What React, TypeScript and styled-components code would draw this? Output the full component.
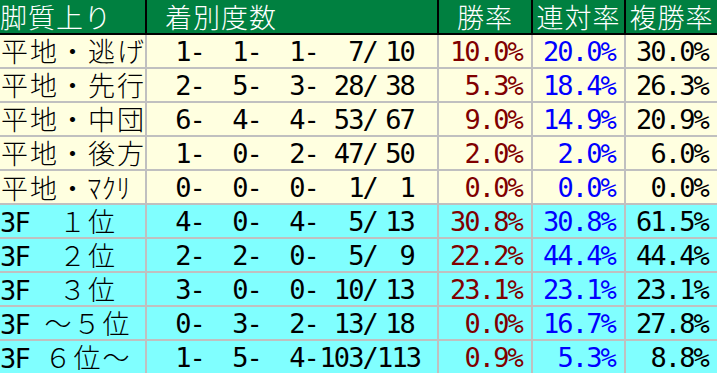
import React from 'react';
import styled, { createGlobalStyle } from 'styled-components';

const COLS = '145px 290px 92px 91px 91px';
const GREEN = '#008040';
const YELLOW = '#ffffe0';
const CYAN = '#80ffff';
const GRID = '#c0c0c0';

const Global = createGlobalStyle`
  html, body { margin: 0; padding: 0; background: ${GRID}; }
  #root { width: 717px; height: 373px; overflow: hidden; }
`;

const Table = styled.div`
  width: 717px;
  display: flex;
  flex-direction: column;
`;

const HeaderRow = styled.div`
  display: grid;
  grid-template-columns: ${COLS};
  column-gap: 2px;
  background: #000;
  padding-bottom: 2px;
`;

const HeaderCell = styled.div<{ $align: 'left' | 'center'; $pad?: number }>`
  height: 33px;
  background: ${GREEN};
  color: #fff;
  font-family: "Noto Sans CJK JP", sans-serif;
  font-weight: 300;
  font-size: 27px;
  line-height: 33px;
  letter-spacing: 1px;
  text-align: ${(p) => p.$align};
  padding-left: ${(p) => p.$pad ?? 0}px;
  box-sizing: border-box;
  white-space: nowrap;
`;

const Body = styled.div`
  display: grid;
  grid-template-columns: ${COLS};
  grid-auto-rows: 32px;
  gap: 2px;
  background: ${GRID};
`;

const Row = styled.div`
  display: contents;
`;

const LabelCell = styled.div<{ $tone: 'yellow' | 'cyan' }>`
  background: ${(p) => (p.$tone === 'yellow' ? YELLOW : CYAN)};
  color: #000;
  font-family: "Noto Sans CJK JP", sans-serif;
  font-weight: 300;
  font-size: 27px;
  line-height: 32px;
  white-space: nowrap;
`;

const Ch = styled.span<{ $kind: 'full' | 'half' | 'ascii' }>`
  display: inline-block;
  width: ${(p) => (p.$kind === 'full' ? 29 : 14.5)}px;
  text-align: center;
  font-family: ${(p) =>
    p.$kind === 'ascii' ? '"DejaVu Sans Mono", monospace' : '"Noto Sans CJK JP", sans-serif'};
  font-size: ${(p) => (p.$kind === 'half' ? 28 : 27)}px;
  letter-spacing: ${(p) => (p.$kind === 'ascii' ? '-1.75px' : 'normal')};
  vertical-align: baseline;
`;

const CountsCell = styled.div<{ $tone: 'yellow' | 'cyan' }>`
  background: ${(p) => (p.$tone === 'yellow' ? YELLOW : CYAN)};
  display: flex;
  color: #000;
  font-family: "DejaVu Sans Mono", monospace;
  font-size: 27px;
  letter-spacing: -1.85px;
  line-height: 30px;
  padding-top: 2px;
  box-sizing: border-box;
  white-space: nowrap;
`;

const Seg = styled.span<{ $w: number }>`
  flex: 0 0 ${(p) => p.$w}px;
  text-align: right;
`;

const RateCell = styled.div<{ $tone: 'yellow' | 'cyan'; $color: string }>`
  background: ${(p) => (p.$tone === 'yellow' ? YELLOW : CYAN)};
  color: ${(p) => p.$color};
  font-family: "DejaVu Sans Mono", monospace;
  font-size: 27px;
  letter-spacing: -1.85px;
  line-height: 30px;
  padding-top: 2px;
  padding-right: 9px;
  box-sizing: border-box;
  text-align: right;
  white-space: nowrap;
`;

type Tone = 'yellow' | 'cyan';
interface Data {
  label: string;
  counts: [number, number, number, number, number];
  rates: [string, string, string];
  tone: Tone;
}

const rows: Data[] = [
  { label: '平地・逃げ', counts: [1, 1, 1, 7, 10], rates: ['10.0%', '20.0%', '30.0%'], tone: 'yellow' },
  { label: '平地・先行', counts: [2, 5, 3, 28, 38], rates: ['5.3%', '18.4%', '26.3%'], tone: 'yellow' },
  { label: '平地・中団', counts: [6, 4, 4, 53, 67], rates: ['9.0%', '14.9%', '20.9%'], tone: 'yellow' },
  { label: '平地・後方', counts: [1, 0, 2, 47, 50], rates: ['2.0%', '2.0%', '6.0%'], tone: 'yellow' },
  { label: '平地・ﾏｸﾘ', counts: [0, 0, 0, 1, 1], rates: ['0.0%', '0.0%', '0.0%'], tone: 'yellow' },
  { label: '3F  １位', counts: [4, 0, 4, 5, 13], rates: ['30.8%', '30.8%', '61.5%'], tone: 'cyan' },
  { label: '3F  ２位', counts: [2, 2, 0, 5, 9], rates: ['22.2%', '44.4%', '44.4%'], tone: 'cyan' },
  { label: '3F  ３位', counts: [3, 0, 0, 10, 13], rates: ['23.1%', '23.1%', '23.1%'], tone: 'cyan' },
  { label: '3F ～５位', counts: [0, 3, 2, 13, 18], rates: ['0.0%', '16.7%', '27.8%'], tone: 'cyan' },
  { label: '3F ６位～', counts: [1, 5, 4, 103, 113], rates: ['0.9%', '5.3%', '8.8%'], tone: 'cyan' },
];

const kindOf = (c: string): 'full' | 'half' | 'ascii' => {
  const code = c.codePointAt(0) ?? 0;
  if (code < 0x80) return 'ascii';
  if (code >= 0xff61 && code <= 0xff9f) return 'half';
  return 'full';
};

const Label: React.FC<{ text: string }> = ({ text }) => (
  <>
    {Array.from(text).map((c, i) => (
      <Ch key={i} $kind={kindOf(c)}>
        {c === ' ' ? '\u00a0' : c}
      </Ch>
    ))}
  </>
);

const SEG_W = [57, 57, 57, 59, 37];

export default function App() {
  return (
    <>
      <Global />
      <Table>
        <HeaderRow>
          <HeaderCell $align="left">脚質上り</HeaderCell>
          <HeaderCell $align="left" $pad={18}>着別度数</HeaderCell>
          <HeaderCell $align="center">勝率</HeaderCell>
          <HeaderCell $align="center">連対率</HeaderCell>
          <HeaderCell $align="center">複勝率</HeaderCell>
        </HeaderRow>
        <Body>
          {rows.map((r, i) => {
            const [a, b, c, d, e] = r.counts;
            const segs = [`${a}-`, `${b}-`, `${c}-`, `${d}/`, `${e}`];
            return (
              <Row key={i}>
                <LabelCell $tone={r.tone}>
                  <Label text={r.label} />
                </LabelCell>
                <CountsCell $tone={r.tone}>
                  {segs.map((s, j) => (
                    <Seg key={j} $w={SEG_W[j]}>
                      {s}
                    </Seg>
                  ))}
                </CountsCell>
                <RateCell $tone={r.tone} $color="#800000">{r.rates[0]}</RateCell>
                <RateCell $tone={r.tone} $color="#0000ff">{r.rates[1]}</RateCell>
                <RateCell $tone={r.tone} $color="#000000">{r.rates[2]}</RateCell>
              </Row>
            );
          })}
        </Body>
      </Table>
    </>
  );
}
